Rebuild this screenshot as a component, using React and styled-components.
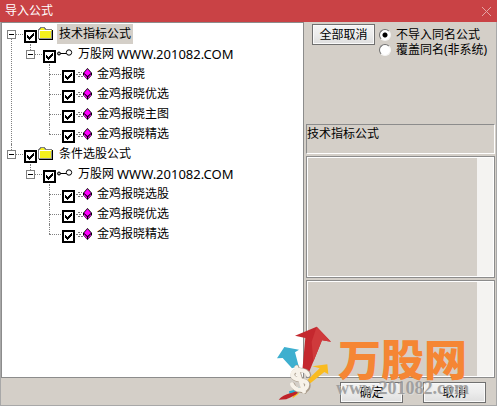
import React, { useState } from 'react';
import styled, { createGlobalStyle, css } from 'styled-components';

const GlobalStyle = createGlobalStyle`
  * { box-sizing: border-box; }
  body { margin: 0; background: #d4cfc8; }
  body, button, input {
    font-family: "Noto Sans", "Noto Sans CJK SC", sans-serif;
    font-size: 12px;
    color: #000;
  }
`;

const Dialog = styled.main`
  position: relative;
  display: flex;
  flex-direction: column;
  min-height: 100vh;
  background: #d4cfc8;
  border: 1px solid #a8a8a8;
  border-top: 0;
  line-height: 20px;
`;

const TitleBar = styled.header`
  display: flex;
  align-items: center;
  justify-content: space-between;
  height: 22px;
  margin: 0 -1px;
  padding: 0 5px;
  background: #c94245;
  color: #fff;
`;

const Title = styled.h1`
  margin: 0;
  font-size: 12px;
  font-weight: 400;
`;

const CloseButton = styled.button`
  display: flex;
  padding: 0;
  border: 0;
  background: none;
`;

const Content = styled.div`
  flex: 1;
  display: grid;
  grid-template-columns: minmax(0, 1fr) 193px;
`;

const TreePanel = styled.nav`
  background: #fff;
  border: 1px solid #8c8c8c;
  border-right: 0;
  padding-top: 1px;
`;

const Branch = styled.ul`
  list-style: none;
  margin: 0;
  padding: 0 0 0 ${(p) => (p.$nested ? '19px' : '0')};
`;

const Node = styled.li`
  position: relative;
  &::before {
    content: "";
    position: absolute;
    left: 9px;
    top: ${(p) => (p.$root && p.$first ? '10px' : '0')};
    ${(p) => (p.$last ? css`height: 10px;` : css`bottom: 0;`)}
    ${(p) => p.$root && p.$first && p.$last && css`display: none;`}
    border-left: 1px dotted #808080;
  }
`;

const Row = styled.div`
  display: flex;
  align-items: center;
  height: 20px;
  white-space: nowrap;
`;

const Joint = styled.span`
  position: relative;
  display: flex;
  align-items: center;
  width: 22px;
  padding-left: 5px;
  &::before {
    content: "";
    position: absolute;
    left: 9px;
    right: 1px;
    top: 50%;
    border-top: 1px dotted #808080;
  }
`;

const Expander = styled.button`
  position: relative;
  display: flex;
  padding: 0;
  border: 0;
  background: #fff;
`;

const Check = styled.input`
  appearance: none;
  width: 13px;
  height: 13px;
  margin: 5px 1px 0 0;
  border: 2px solid #000;
  background: #fff;
  &:checked {
    background: linear-gradient(#000, #000) 1px 3px / 1px 3px no-repeat,
      linear-gradient(#000, #000) 2px 4px / 1px 3px no-repeat,
      linear-gradient(#000, #000) 3px 5px / 1px 3px no-repeat,
      linear-gradient(#000, #000) 4px 4px / 1px 3px no-repeat,
      linear-gradient(#000, #000) 5px 3px / 1px 3px no-repeat,
      linear-gradient(#000, #000) 6px 2px / 1px 3px no-repeat,
      linear-gradient(#000, #000) 7px 1px / 1px 3px no-repeat, #fff;
  }
`;

const NodeLabel = styled.label`
  display: flex;
  align-items: center;
  gap: 3px;
`;

const NodeText = styled.span`
  display: flex;
  gap: 3px;
  padding: 0 2px;
  background: ${(p) => (p.$selected ? '#d4cfc8' : 'transparent')};
`;

const SiteName = styled.span`
  font-size: 13px;
`;

const SidePanel = styled.section`
  display: flex;
  flex-direction: column;
  border-left: 1px solid #8c8c8c;
  padding-left: 2px;
  padding-right: 1px;
`;

const Options = styled.div`
  display: flex;
  align-items: flex-start;
  gap: 4px;
  height: 102px;
  padding: 2px 0 0 6px;
`;

const PushButton = styled.button`
  width: 63px;
  height: 21px;
  padding: 0;
  border: 1px solid #707070;
  background: linear-gradient(#f4f4f4, #ececec 50%, #dedede);
  box-shadow: inset 0 0 0 1px #fafafa;
  line-height: 18px;
`;

const RadioGroup = styled.div`
  display: flex;
  flex-direction: column;
  padding-top: 3px;
`;

const RadioLabel = styled.label`
  display: flex;
  align-items: center;
  gap: 5px;
  height: 15px;
  white-space: nowrap;
`;

const Radio = styled.input`
  appearance: none;
  width: 12px;
  height: 12px;
  margin: 0;
  border: 1px solid;
  border-color: #707070 #f4f3f1 #f4f3f1 #707070;
  border-radius: 50%;
  background: #fff;
  &:checked {
    background: radial-gradient(circle, #000 2px, #fff 3px);
  }
`;

const Caption = styled.p`
  height: 30px;
  margin: 0 0 2px;
  border: 1px solid;
  border-color: #8c8c8c #fff #fff #8c8c8c;
  line-height: 18px;
`;

const ListBox = styled.div`
  display: flex;
  justify-content: flex-end;
  flex: ${(p) => p.$grow} 1 0;
  margin-bottom: ${(p) => (p.$spaced ? '2px' : '0')};
  border: 1px solid #8c8c8c;
  box-shadow: inset 0 0 0 1px #fff;
  padding: 1px;
`;

const ScrollTrack = styled.div`
  width: 16px;
  background: #f4f3f1;
`;

const Footer = styled.footer`
  display: flex;
  justify-content: flex-end;
  gap: 20px;
  padding: 4px 10px 2px;
`;

const Watermark = styled.div`
  position: absolute;
  right: 27px;
  bottom: 4px;
  display: flex;
  align-items: flex-start;
  gap: 4px;
  pointer-events: none;
`;

const Brand = styled.div`
  display: flex;
  flex-direction: column;
  align-items: center;
  padding-top: 9px;
`;

const BrandName = styled.span`
  color: #f58634;
  font: 900 43px/44px "Noto Sans CJK SC", sans-serif;
`;

const BrandUrl = styled.span`
  color: rgba(150, 150, 150, 0.85);
  font: 700 18px/18px "Liberation Serif", serif;
  text-shadow: 1px 1px 0 rgba(225, 225, 225, 0.6);
`;

const CloseIcon = () => (
  <svg width="11" height="11" viewBox="0 0 11 11" stroke="#e5a5a5" aria-hidden="true">
    <path d="M1 1 10 10M10 1 1 10" />
  </svg>
);

const MinusBox = ({ open }) => (
  <svg width="9" height="9" shapeRendering="crispEdges" aria-hidden="true">
    <rect x="0.5" y="0.5" width="8" height="8" fill="#fff" stroke="#808080" />
    <path d={open ? 'M2 4.5h5' : 'M2 4.5h5M4.5 2v5'} stroke="#000" />
  </svg>
);

const FolderIcon = () => (
  <svg width="16" height="16" viewBox="0 0 16 16" shapeRendering="crispEdges" aria-hidden="true">
    <path d="M1 13V3h1V2h1V1h4v1h1v1h6v10z" fill="#f4f01c" />
    <path d="M0.5 13V3.5h1v-1h1v-1h4v1h1v1h6" fill="none" stroke="#808080" />
    <path d="M1.5 12V4.5H13" fill="none" stroke="#fff" />
    <path d="M14.5 4v9.500H1" fill="none" stroke="#000" />
    <path d="M13.5 5v7.500H1" fill="none" stroke="#999" />
  </svg>
);

const KeyIcon = () => (
  <svg width="16" height="16" viewBox="0 0 16 16" fill="none" stroke="#000" aria-hidden="true">
    <circle cx="2" cy="7.5" r="1.5" fill="#aaa" />
    <path d="M3.5 7.5H9" />
    <circle cx="12" cy="6.5" r="2.7" />
  </svg>
);

const DiamondIcon = () => (
  <svg width="16" height="16" viewBox="0 0 16 16" aria-hidden="true">
    <path d="M2 6.500h4M0 8.500h6M2 10.500h5" stroke="#808080" strokeDasharray="2 1" />
    <path d="M11.500 2 16 7v2l-4.500 5L7 9V7z" fill="#000" />
    <path d="M11.500 3 15 7l-3.500 3L8 7z" fill="#f0f" />
    <path d="M8 8 11 11v2L8 9.500z" fill="#f0f" />
    <path d="M15 8 12 11v2l3-3.500z" fill="#d000d0" />
  </svg>
);

const ArrowsLogo = () => (
  <svg width="55" height="75" viewBox="36 33 165 225" aria-hidden="true">
    <path d="M112 166 121 69 90 62 155 35 198 80 171 76 132 172z" fill="#c4282e" />
    <path d="M155 35 198 80 171 76 145 140 140 80z" fill="#cf3a3c" />
    <path d="M81 160 53 129 36 130 58 96 102 104 90 112 101 153z" fill="#3eafcf" />
    <path d="M128 194 164 160 142 154 187 148 190 178 178 171 136 205z" fill="#f9bb20" />
    <path d="M83 250C84 232 100 228 107 216L101 236z" fill="#f9bb20" />
    <path d="M72 229 96 223 103 215 99 235 74 239z" fill="#25acd0" />
    <path d="M41 254C58 232 88 237 104 221 98 243 76 245 64 253z" fill="#bf2229" />
    <g fill="none" strokeLinecap="round">
      <path d="M132 181C127 160 85 160 84 180 83 201 130 191 130 211 129 236 91 230 84 210M96 157 119 230" stroke="#a99c8b" strokeWidth="14" />
      <path d="M129 180C124 160 82 160 82 179 82 199 127 190 127 209 126 232 90 228 81 208M94 157 117 230" stroke="#f7f2e9" strokeWidth="12" />
    </g>
  </svg>
);

const icons = { folder: FolderIcon, key: KeyIcon, diamond: DiamondIcon };

const formula = (text) => ({ text, icon: 'diamond' });
const group = (text, names) => ({
  text,
  icon: 'folder',
  children: [{ text: '万股网', site: 'WWW.201082.COM', icon: 'key', children: names.map(formula) }],
});

const tree = [
  group('技术指标公式', ['金鸡报晓', '金鸡报晓优选', '金鸡报晓主图', '金鸡报晓精选']),
  group('条件选股公式', ['金鸡报晓选股', '金鸡报晓优选', '金鸡报晓精选']),
];

function TreeNode({ node, path, root, first, last }) {
  const [open, setOpen] = useState(true);
  const Icon = icons[node.icon];
  const id = `node-${path}`;
  return (
    <Node $root={root} $first={first} $last={last}>
      <Row>
        <Joint>
          {node.children && (
            <Expander type="button" aria-label={node.text} aria-expanded={open} onClick={() => setOpen(!open)}>
              <MinusBox open={open} />
            </Expander>
          )}
        </Joint>
        <Check type="checkbox" id={id} defaultChecked />
        <NodeLabel htmlFor={id}>
          <Icon />
          <NodeText $selected={path === '0'}>
            {node.text}
            {node.site && <SiteName>{node.site}</SiteName>}
          </NodeText>
        </NodeLabel>
      </Row>
      {node.children && open && <TreeList nodes={node.children} path={path} nested />}
    </Node>
  );
}

function TreeList({ nodes, path, nested }) {
  return (
    <Branch $nested={nested}>
      {nodes.map((node, i) => (
        <TreeNode
          key={node.text}
          node={node}
          path={nested ? `${path}-${i}` : String(i)}
          root={!nested}
          first={i === 0}
          last={i === nodes.length - 1}
        />
      ))}
    </Branch>
  );
}

export default function App() {
  return (
    <>
      <GlobalStyle />
      <Dialog>
        <TitleBar>
          <Title>导入公式</Title>
          <CloseButton type="button" aria-label="关闭">
            <CloseIcon />
          </CloseButton>
        </TitleBar>
        <Content>
          <TreePanel>
            <TreeList nodes={tree} />
          </TreePanel>
          <SidePanel>
            <Options>
              <PushButton type="button">全部取消</PushButton>
              <RadioGroup role="radiogroup">
                <RadioLabel>
                  <Radio type="radio" name="mode" defaultChecked />
                  不导入同名公式
                </RadioLabel>
                <RadioLabel>
                  <Radio type="radio" name="mode" />
                  覆盖同名(非系统)
                </RadioLabel>
              </RadioGroup>
            </Options>
            <Caption>技术指标公式</Caption>
            <ListBox $grow={122} $spaced>
              <ScrollTrack />
            </ListBox>
            <ListBox $grow={98}>
              <ScrollTrack />
            </ListBox>
          </SidePanel>
        </Content>
        <Footer>
          <PushButton type="button">确定</PushButton>
          <PushButton type="button">取消</PushButton>
        </Footer>
        <Watermark>
          <ArrowsLogo />
          <Brand>
            <BrandName>万股网</BrandName>
            <BrandUrl>www.201082.com</BrandUrl>
          </Brand>
        </Watermark>
      </Dialog>
    </>
  );
}
